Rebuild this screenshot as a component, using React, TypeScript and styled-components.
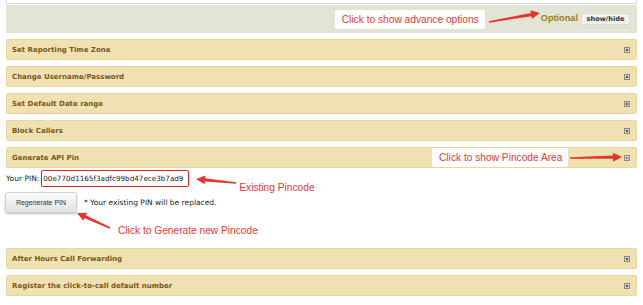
import React from 'react'
import styled, { createGlobalStyle } from 'styled-components'

const GlobalStyle = createGlobalStyle`
  html, body {
    margin: 0;
    padding: 0;
    background: #fff;
  }
  body {
    font-family: "DejaVu Sans", Verdana, sans-serif;
  }
`

const Page = styled.div`
  width: 643px;
  height: 305px;
  box-sizing: border-box;
  padding: 0 6px;
  overflow: hidden;
  display: flex;
  flex-direction: column;
`

const TopStub = styled.div`
  height: 3px;
  background: #fff;
  border: 1px solid #d9d9d9;
  border-top: none;
`

const OptionsBar = styled.div`
  margin-top: 1px;
  height: 28px;
  background: #e4e4d6;
  display: flex;
  align-items: stretch;
  justify-content: flex-end;
  padding-right: 7px;
`

const Callout = styled.div<{ $width: number }>`
  align-self: center;
  width: ${p => p.$width}px;
  height: 19px;
  box-sizing: border-box;
  padding-left: 7px;
  background: #fff;
  border-radius: 2px;
  display: flex;
  align-items: center;
  font-family: "Liberation Sans", Arial, sans-serif;
  font-size: 10.2px;
  color: #e23b33;
  white-space: nowrap;
`

const RedNote = styled.span`
  font-family: "Liberation Sans", Arial, sans-serif;
  font-size: 10.2px;
  line-height: 13px;
  color: #e23b33;
  white-space: nowrap;
`

const OptionalLabel = styled.span`
  align-self: center;
  margin-top: -3px;
  font-family: "Liberation Sans", Arial, sans-serif;
  font-weight: bold;
  font-size: 9.2px;
  color: #a67a0e;
  margin-right: 3px;
`

const ShowHide = styled.button`
  align-self: center;
  height: 12px;
  width: 49px;
  padding: 0;
  border: 1px solid #dcdcd2;
  border-radius: 1px;
  background: #f1f1ee;
  font-family: "DejaVu Sans", Verdana, sans-serif;
  font-weight: bold;
  font-size: 6.6px;
  color: #333;
  line-height: 10px;
`

const ArrowSvg = styled.svg`
  display: block;
  flex: none;
  overflow: visible;
`

const Sections = styled.div`
  margin-top: 6px;
  display: flex;
  flex-direction: column;
  gap: 6px;
`

const Header = styled.div`
  height: 21px;
  box-sizing: border-box;
  padding: 0 6px 0 5px;
  background: #f0e1b2;
  border: 1px solid #e9d69e;
  border-radius: 2px;
  display: flex;
  align-items: center;
`

const Title = styled.span`
  flex: 1;
  font-weight: bold;
  font-size: 7px;
  color: #765817;
  white-space: nowrap;
`

const PinPanel = styled.div`
  padding: 2px 0 5px;
  display: flex;
  flex-direction: column;
`

const PinRow = styled.div`
  height: 17px;
  display: flex;
  align-items: center;
`

const Label = styled.span`
  font-size: 7.5px;
  color: #222;
  white-space: nowrap;
`

const PinBox = styled.div`
  margin-left: 2px;
  width: 148px;
  height: 17px;
  box-sizing: border-box;
  padding-left: 1px;
  border: 1.5px solid #d8262b;
  border-radius: 2px;
  display: flex;
  align-items: center;
  font-size: 7.2px;
  color: #222;
  white-space: nowrap;
  overflow: hidden;
`

const LowNote = styled(RedNote)`
  align-self: flex-end;
  margin-bottom: -7px;
`

const ButtonRow = styled.div`
  margin-top: 5px;
  display: flex;
  align-items: center;
`

const RegenButton = styled.button`
  margin-left: -1px;
  width: 72px;
  height: 21px;
  padding: 0;
  border: 1px solid #d0d0d0;
  border-radius: 3px;
  background: linear-gradient(#fdfdfd, #e1e1e1);
  box-shadow: 0 1px 2px rgba(0, 0, 0, 0.28);
  font-family: "Liberation Sans", Arial, sans-serif;
  font-size: 7px;
  color: #333;
`

const Hint = styled.span`
  margin-left: 7px;
  font-size: 7.5px;
  color: #222;
  white-space: nowrap;
`

const HintRow = styled.div`
  height: 24px;
  padding-left: 70px;
  display: flex;
  align-items: flex-start;

  ${RedNote} {
    align-self: flex-end;
    margin-left: 6px;
  }
`

type Pt = [number, number]

const Arrow = ({ w, h, from, to }: { w: number; h: number; from: Pt; to: Pt }) => {
  const [x1, y1] = from
  const [x2, y2] = to
  const len = Math.hypot(x2 - x1, y2 - y1)
  const ux = (x2 - x1) / len
  const uy = (y2 - y1) / len
  const px = -uy
  const py = ux
  const headLen = 9
  const headW = 4.5
  const bx = x2 - ux * headLen
  const by = y2 - uy * headLen
  const pts: Pt[] = [
    [x1 + px * 0.7, y1 + py * 0.7],
    [bx + px * 1.6, by + py * 1.6],
    [bx + px * headW, by + py * headW],
    [x2, y2],
    [bx - px * headW, by - py * headW],
    [bx - px * 1.6, by - py * 1.6],
    [x1 - px * 0.7, y1 - py * 0.7],
  ]
  return (
    <ArrowSvg width={w} height={h} viewBox={`0 0 ${w} ${h}`}>
      <polygon points={pts.map(p => p.join(',')).join(' ')} fill="#e2362e" />
    </ArrowSvg>
  )
}

const ToggleIcon = ({ open }: { open?: boolean }) => (
  <ArrowSvg width={6} height={6} viewBox="0 0 6 6">
    <rect x="0.5" y="0.5" width="5" height="5" fill="#d9d8ca" stroke="#8d8c7c" strokeWidth="1" />
    <path d={open ? 'M1.8 3H4.2' : 'M1.8 3H4.2M3 1.8V4.2'} stroke="#333" strokeWidth="1" />
  </ArrowSvg>
)

const Section = ({ title, open, children }: { title: string; open?: boolean; children?: React.ReactNode }) => (
  <Header>
    <Title>{title}</Title>
    {children}
    <ToggleIcon open={open} />
  </Header>
)

const App = () => (
  <>
    <GlobalStyle />
    <Page>
      <TopStub />
      <OptionsBar>
        <Callout $width={150}>Click to show advance options</Callout>
        <Arrow w={56} h={28} from={[4, 17]} to={[55, 8]} />
        <OptionalLabel>Optional</OptionalLabel>
        <ShowHide>show/hide</ShowHide>
      </OptionsBar>

      <Sections>
        <Section title="Set Reporting Time Zone" />
        <Section title="Change Username/Password" />
        <Section title="Set Default Date range" />
        <Section title="Block Callers" />
        <div>
          <Section title="Generate API Pin" open>
            <Callout $width={136}>Click to show Pincode Area</Callout>
            <Arrow w={56} h={19} from={[2, 10]} to={[54, 9]} />
          </Section>
          <PinPanel>
            <PinRow>
              <Label>Your PIN:</Label>
              <PinBox>00e770d1165f3adfc99bd47ece3b7ad9</PinBox>
              <Arrow w={50} h={17} from={[47, 13]} to={[7, 9]} />
              <LowNote>Existing Pincode</LowNote>
            </PinRow>
            <ButtonRow>
              <RegenButton>Regenerate PIN</RegenButton>
              <Hint>* Your existing PIN will be replaced.</Hint>
            </ButtonRow>
            <HintRow>
              <Arrow w={36} h={18} from={[34, 15]} to={[1, 0]} />
              <RedNote>Click to Generate new Pincode</RedNote>
            </HintRow>
          </PinPanel>
        </div>
        <Section title="After Hours Call Forwarding" />
        <Section title="Register the click-to-call default number" />
      </Sections>
    </Page>
  </>
)

export default App
